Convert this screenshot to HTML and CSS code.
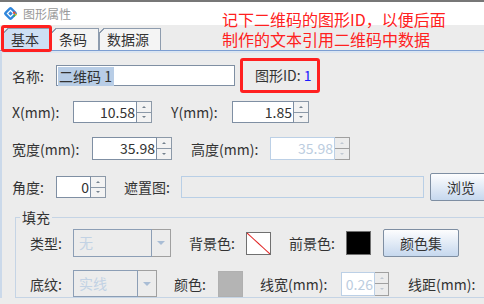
FILE: index.html
```html
<!DOCTYPE html>
<html>
<head>
    <meta charset="UTF-8">
    <title>图形属性</title>
    <link rel="stylesheet" href="styles.css">
</head>
<body>
<div class="dialog">
    <div class="topline"></div>
    <div class="titlebar">
        <svg class="app-icon" viewBox="0 0 15 15">
            <rect x="2.3" y="2.3" width="10.4" height="10.4" rx="2.2" transform="rotate(45 7.5 7.5)" fill="#2f86dc"/>
            <rect x="5.3" y="5.3" width="4.4" height="4.4" transform="rotate(45 7.5 7.5)" fill="none" stroke="#fff" stroke-width="1.2"/>
            <circle cx="11.2" cy="6.8" r="1.3" fill="#e84b3c"/>
            <circle cx="12.8" cy="8.4" r="1" fill="#f4c20d"/>
            <circle cx="11.2" cy="9.8" r="1" fill="#3cb54a"/>
        </svg>
        <span class="title">图形属性</span>
    </div>

    <div class="tabs">
        <div class="tab active">基本</div>
        <div class="tab">条码</div>
        <div class="tab">数据源</div>
    </div>

    <div class="page">
        <div class="row row-name">
            <span class="lbl w44">名称:</span>
            <div class="textbox name-box"><span class="sel">二维码 1</span></div>
            <div class="shape-id">图形ID: <span class="id-val">1</span></div>
        </div>

        <div class="row row-pos">
            <span class="lbl w61">X(mm):</span>
            <div class="spin">
                <div class="spin-val w64">10.58</div>
                <div class="spin-btns"><span class="up"></span><span class="dn"></span></div>
            </div>
            <span class="lbl w61 gap19">Y(mm):</span>
            <div class="spin">
                <div class="spin-val w62">1.85</div>
                <div class="spin-btns"><span class="up"></span><span class="dn"></span></div>
            </div>
        </div>

        <div class="row row-size">
            <span class="lbl w80">宽度(mm):</span>
            <div class="spin">
                <div class="spin-val w65">35.98</div>
                <div class="spin-btns"><span class="up"></span><span class="dn"></span></div>
            </div>
            <span class="lbl w79 gap19">高度(mm):</span>
            <div class="spin disabled">
                <div class="spin-val w65">35.98</div>
                <div class="spin-btns"><span class="up"></span><span class="dn"></span></div>
            </div>
        </div>

        <div class="row row-angle">
            <span class="lbl w44">角度:</span>
            <div class="spin">
                <div class="spin-val w35">0</div>
                <div class="spin-btns"><span class="up"></span><span class="dn"></span></div>
            </div>
            <span class="lbl w57 gap18">遮置图:</span>
            <div class="textbox mask-box"></div>
            <div class="btn btn-browse">浏览</div>
        </div>

        <fieldset class="group">
            <legend>填充</legend>
            <div class="row row-fill">
                <span class="lbl w43">类型:</span>
                <div class="combo">
                    <div class="combo-edit w79">无</div>
                    <div class="combo-arrow"></div>
                </div>
                <span class="lbl w57 gap18">背景色:</span>
                <div class="swatch swatch-none"></div>
                <span class="lbl w57 gap18">前景色:</span>
                <div class="swatch swatch-black"></div>
                <div class="btn btn-colors">颜色集</div>
            </div>
            <div class="row row-hatch">
                <span class="lbl w43">底纹:</span>
                <div class="combo">
                    <div class="combo-edit w65">实线</div>
                    <div class="combo-arrow"></div>
                </div>
                <span class="lbl w44 gap17">颜色:</span>
                <div class="swatch swatch-gray"></div>
                <span class="lbl w81 gap17">线宽(mm):</span>
                <div class="spin disabled small">
                    <div class="spin-val w34">0.26</div>
                    <div class="spin-btns"><span class="up"></span><span class="dn"></span></div>
                </div>
                <span class="lbl gap19">线距(mm):</span>
            </div>
        </fieldset>
    </div>

    <!-- anotaciones en rojo -->
    <div class="tab-mark"></div>
    <div class="note">记下二维码的图形ID，以便后面<br>制作的文本引用二维码中数据</div>
</div>
</body>
</html>
```

FILE: styles.css
```css
* {
    box-sizing: border-box;
}

body {
    margin: 0;
    font-family: "Noto Sans CJK SC", "Microsoft YaHei", sans-serif;
    font-size: 14px;
    color: #333;
    background-color: #ececec;
}

.dialog {
    position: relative;
    width: 484px;
    height: 304px;
    overflow: hidden;
    background-color: #ececec;
}

.topline {
    height: 2px;
    background-color: #777;
}

.titlebar {
    height: 23px;
    background-color: #fff;
    display: flex;
    align-items: center;
    padding-left: 3px;
}

.app-icon {
    width: 15px;
    height: 15px;
}

.title {
    margin-left: 5px;
    font-size: 12px;
    line-height: 14px;
    color: #999;
}

/* pestañas */
.tabs {
    height: 26px;
    display: flex;
    align-items: flex-end;
    padding-left: 3px;
    border-bottom: 1px solid #7c9ed2;
}

.tab {
    position: relative;
    height: 22px;
    padding: 0 11px 0 7px;
    border: 1px solid #8e9cae;
    border-bottom: none;
    background-color: #f4f4f4;
    line-height: 20px;
}

.tab::before {
    content: "";
    position: absolute;
    left: -1px;
    top: -1px;
    width: 5px;
    height: 5px;
    background: linear-gradient(to bottom right, #ececec 45%, #8e9cae 45%, #8e9cae 65%, transparent 65%);
}

.tab.active {
    background-color: #cddff3;
}

.page {
    border-top: 2px solid #dbe5f1;
    border-left: 2px solid #cbd9ea;
    padding-left: 10px;
}

.row {
    display: flex;
    align-items: center;
    white-space: nowrap;
}

.row > * {
    flex-shrink: 0;
}

.lbl {
    line-height: 16px;
}

.w34 { width: 34px; }
.w35 { width: 35px; }
.w43 { width: 43px; }
.w44 { width: 44px; }
.w57 { width: 57px; }
.w61 { width: 61px; }
.w62 { width: 62px; }
.w64 { width: 64px; }
.w65 { width: 65px; }
.w79 { width: 79px; }
.w80 { width: 80px; }
.w81 { width: 81px; }

.gap17 { margin-left: 17px; }
.gap18 { margin-left: 18px; }
.gap19 { margin-left: 19px; }

.row-name {
    margin-top: 5px;
    height: 35px;
}

.row-pos {
    margin-top: 8px;
    height: 22px;
}

.row-size {
    margin-top: 14px;
    height: 23px;
}

.row-angle {
    margin-top: 13px;
    height: 28px;
}

.textbox {
    height: 21px;
    border: 1px solid #7f8fa3;
    background-color: #fff;
}

.name-box {
    width: 179px;
    padding: 0 1px;
}

.sel {
    display: inline-block;
    height: 19px;
    line-height: 19px;
    padding: 0 2px 0 1px;
    background-color: #b8cde6;
}

.shape-id {
    margin-left: 5px;
    width: 80px;
    height: 35px;
    border: 3px solid #ff2020;
    border-radius: 3px;
    padding-left: 12px;
    line-height: 29px;
}

.id-val {
    color: #1a1aff;
}

.mask-box {
    width: 243px;
    height: 22px;
    border-color: #b9cfe6;
    background-color: #ececec;
}

/* campos numéricos */
.spin {
    display: flex;
    height: 100%;
}

.row-angle .spin {
    height: 22px;
}

.spin-val {
    border: 1px solid #7f8fa3;
    background-color: #fff;
    text-align: right;
    padding-right: 1px;
    line-height: 20px;
}

.spin-btns {
    width: 15px;
    display: flex;
    flex-direction: column;
}

.spin-btns span {
    flex: 1;
    display: flex;
    align-items: center;
    justify-content: center;
    border: 1px solid #8c99a8;
    border-left: none;
    background-color: #f3f3f3;
}

.spin-btns .dn {
    border-top: none;
}

.spin-btns .up::after {
    content: "";
    border-left: 2px solid transparent;
    border-right: 2px solid transparent;
    border-bottom: 2px solid #75818e;
}

.spin-btns .dn::after {
    content: "";
    border-left: 2px solid transparent;
    border-right: 2px solid transparent;
    border-top: 2px solid #75818e;
}

.spin.disabled .spin-val {
    border-color: #bcd0e6;
    color: #bccde0;
}

.spin.disabled .spin-btns span {
    border-color: #a0a0a0;
    background-color: #ececec;
}

.spin.disabled .spin-btns span::after {
    border-top-color: #c0c8d2;
    border-bottom-color: #c0c8d2;
}

.spin.small {
    height: 24px;
}

.spin.small .spin-btns {
    width: 14px;
}

.spin.small .spin-val {
    line-height: 22px;
}

/* botones */
.btn {
    height: 28px;
    border: 1px solid #7e8ea2;
    border-radius: 2px;
    background: linear-gradient(#fdfdfe, #c6d8ee);
    text-align: center;
    line-height: 26px;
    color: #333;
}

.btn-browse {
    margin-left: 6px;
    width: 62px;
}

.btn-colors {
    margin-left: 12px;
    width: 76px;
}

/* grupo relleno */
.group {
    margin: 8px 0 0 3px;
    padding: 0;
    width: 520px;
    border: 1px solid #c5d4e5;
}

.group legend {
    margin-left: 4px;
    padding: 0 2px;
    line-height: 16px;
}

.group .row {
    margin-left: 14px;
}

.row-fill {
    margin-top: 4px;
    height: 28px;
}

.row-hatch {
    margin-top: 13px;
    height: 27px;
}

.combo {
    display: flex;
    height: 28px;
}

.row-hatch .combo {
    height: 27px;
}

.combo-edit {
    border: 1px solid #8c9eb5;
    background-color: #ececec;
    color: #c2d2e4;
    padding-left: 5px;
    line-height: 25px;
}

.combo-arrow {
    width: 19px;
    border: 1px solid #a0a0a0;
    border-left: none;
    background-color: #ececec;
    display: flex;
    align-items: center;
    justify-content: center;
}

.combo-arrow::after {
    content: "";
    border-left: 4px solid transparent;
    border-right: 4px solid transparent;
    border-top: 4px solid #a9bdd5;
}

.swatch {
    width: 25px;
    border: 1px solid #707070;
}

.swatch-none {
    height: 23px;
    background: linear-gradient(to top right, #fff calc(50% - 1px), #e02020 50%, #fff calc(50% + 1px));
}

.swatch-black {
    height: 24px;
    background-color: #000;
}

.swatch-gray {
    height: 26px;
    border-color: #b0b0b0;
    background-color: #b4b4b4;
}

/* anotaciones */
.tab-mark {
    position: absolute;
    left: 1px;
    top: 25px;
    width: 51px;
    height: 27px;
    border: 3px solid #ff2020;
    border-radius: 3px;
}

.note {
    position: absolute;
    left: 222px;
    top: 9px;
    font-size: 16px;
    line-height: 20px;
    color: #ff2020;
    white-space: nowrap;
}
```
